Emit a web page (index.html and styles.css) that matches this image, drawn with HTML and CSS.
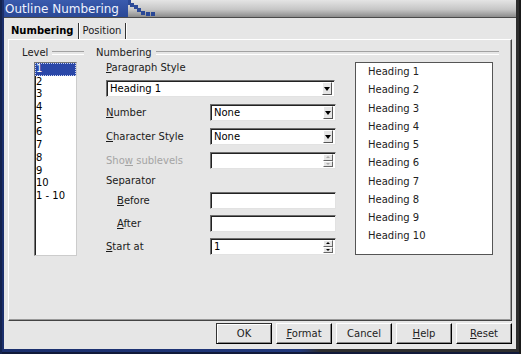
FILE: index.html
```html
<!DOCTYPE html>
<html lang="en">
<head>
  <meta charset="UTF-8">
  <meta name="viewport" content="width=device-width, initial-scale=1.0">
  <title>Outline Numbering</title>

  <link rel="stylesheet" href="styles.css">

</head>
<body>

  <div class="window">
    <!-- Title bar -->
    <div class="titlebar">
      <div class="title">Outline Numbering</div>
      <svg class="title-steps" width="30" height="17" viewBox="0 0 30 17">
        <rect x="0" y="0" width="3" height="5" fill="#2c4a98"/>
        <rect x="2" y="3" width="4" height="4" fill="#2c4a98"/>
        <rect x="6" y="5" width="4" height="4" fill="#2c4a98"/>
        <rect x="9" y="8" width="4" height="4" fill="#2c4a98"/>
        <rect x="13" y="11" width="4" height="4" fill="#2a4896"/>
        <rect x="18" y="12" width="4" height="4" fill="#2a4896"/>
        <rect x="23" y="12" width="4" height="4" fill="#2a4896"/>
      </svg>
    </div>

    <div class="dialog">
      <!-- Tabs -->
      <div class="tabs">
        <span class="tab active">Numbering</span>
        <span class="tab">Position</span>
      </div>

      <!-- Tab page -->
      <div class="panel">
        <div class="group level-group">
          <div class="group-title">Level</div>
          <ul class="level-list">
            <li class="selected">1</li>
            <li>2</li>
            <li>3</li>
            <li>4</li>
            <li>5</li>
            <li>6</li>
            <li>7</li>
            <li>8</li>
            <li>9</li>
            <li>10</li>
            <li>1 - 10</li>
          </ul>
        </div>

        <div class="group numbering-group">
          <div class="group-title">Numbering</div>
          <div class="numbering-body">
            <div class="form">
              <div class="label"><u>P</u>aragraph Style</div>
              <div class="field combo wide">
                <span class="value">Heading 1</span>
                <span class="drop"><i class="arrow"></i></span>
              </div>

              <div class="field-row row-number">
                <div class="label"><u>N</u>umber</div>
                <div class="field combo">
                  <span class="value">None</span>
                  <span class="drop"><i class="arrow"></i></span>
                </div>
              </div>

              <div class="field-row row-gap">
                <div class="label"><u>C</u>haracter Style</div>
                <div class="field combo">
                  <span class="value">None</span>
                  <span class="drop"><i class="arrow"></i></span>
                </div>
              </div>

              <div class="field-row row-gap">
                <div class="label disabled">Sho<u>w</u> sublevels</div>
                <div class="field spin disabled">
                  <span class="value"></span>
                  <span class="spin-btns">
                    <span class="spin-btn"><i class="up"></i></span>
                    <span class="spin-btn"><i class="down"></i></span>
                  </span>
                </div>
              </div>

              <div class="label separator">Separator</div>

              <div class="field-row row-before">
                <div class="label indent"><u>B</u>efore</div>
                <div class="field"></div>
              </div>

              <div class="field-row row-after">
                <div class="label indent"><u>A</u>fter</div>
                <div class="field"></div>
              </div>

              <div class="field-row row-after">
                <div class="label"><u>S</u>tart at</div>
                <div class="field spin">
                  <span class="value">1</span>
                  <span class="spin-btns">
                    <span class="spin-btn"><i class="up"></i></span>
                    <span class="spin-btn"><i class="down"></i></span>
                  </span>
                </div>
              </div>
            </div>

            <!-- Preview -->
            <ul class="preview">
              <li>Heading 1</li>
              <li>Heading 2</li>
              <li>Heading 3</li>
              <li>Heading 4</li>
              <li>Heading 5</li>
              <li>Heading 6</li>
              <li>Heading 7</li>
              <li>Heading 8</li>
              <li>Heading 9</li>
              <li>Heading 10</li>
            </ul>
          </div>
        </div>
      </div>

      <!-- Dialog buttons -->
      <div class="buttons">
        <button class="btn default">OK</button>
        <button class="btn"><u>F</u>ormat</button>
        <button class="btn">Cancel</button>
        <button class="btn"><u>H</u>elp</button>
        <button class="btn"><u>R</u>eset</button>
      </div>
    </div>
  </div>

</body>
</html>
```

FILE: styles.css
```css
/* General Reset */
* {
  margin: 0;
  padding: 0;
  box-sizing: border-box;
}

body {
  font-family: 'DejaVu Sans', sans-serif;
  font-size: 10px;
  color: #1a1a1a;
  background-color: #fff;
}

/* Window frame */
.window {
  width: 521px;
  height: 354px;
  display: flex;
  flex-direction: column;
  padding: 0 5px 5px 4px;
  background: linear-gradient(90deg, #1b2f6c 0, #21387c 300px, #2e2e2e 320px, #2e2e2e 100%);
  box-shadow: inset 2px 0 0 #14234f, inset -2px 0 0 #1a1a1a, inset 0 -2px 0 #111a3a;
}

/* Title bar */
.titlebar {
  height: 18px;
  display: flex;
  background: linear-gradient(#e4e4e4, #c6c6c6 55%, #8c8c8c);
  border-bottom: 1px solid #4a4a4a;
}

.title {
  width: 124px;
  padding: 1px 0 0 1px;
  font-size: 12px;
  line-height: 16px;
  color: #eef2ff;
  white-space: nowrap;
  background: linear-gradient(#3a5bae, #2a4896);
}

.title-steps {
  display: block;
}

/* Dialog body */
.dialog {
  flex: 1;
  display: flex;
  flex-direction: column;
  padding: 0 4px;
  background-color: #e6e6e6;
}

.tabs {
  height: 21px;
  display: flex;
  padding-top: 5px;
}

.tab {
  height: 16px;
  line-height: 16px;
  padding: 0 4px;
  border-right: 1px solid #333;
  box-shadow: 1px 0 0 #fff;
}

.tab:first-child {
  padding-left: 3px;
}

.tab.active {
  font-weight: bold;
  color: #000;
}

/* Tab page */
.panel {
  height: 282px;
  display: flex;
  gap: 12px;
  padding: 6px 12px 0 13px;
  border: 1px solid;
  border-color: #fff #444 #444 #fff;
  box-shadow: inset -1px -1px 0 #999;
}

.group-title {
  height: 13px;
  line-height: 13px;
  display: flex;
  align-items: center;
  color: #222;
}

.group-title::after {
  content: "";
  flex: 1;
  height: 2px;
  margin-left: 4px;
  border-top: 1px solid #a2a2a2;
  border-bottom: 1px solid #fff;
}

.level-group {
  width: 62px;
}

.numbering-group {
  width: 403px;
}

/* Level list */
.level-list {
  list-style: none;
  width: 43px;
  height: 194px;
  margin: 3px 0 0 12px;
  background-color: #fff;
  border: 1px solid;
  border-color: #777 #ccc #ccc #777;
  box-shadow: inset 1px 1px 0 #222;
}

.level-list li {
  height: 12.7px;
  line-height: 12.7px;
  padding-left: 1px;
  color: #000;
}

.level-list li.selected {
  color: #fff;
  background-color: #2a47a8;
  outline: 1px dotted #c9d3f2;
  outline-offset: -1px;
}

/* Numbering form */
.numbering-body {
  display: flex;
  gap: 19px;
  padding-left: 10px;
  margin-top: 3px;
}

.form {
  width: 230px;
  display: flex;
  flex-direction: column;
}

.label {
  height: 12px;
  line-height: 12px;
  white-space: nowrap;
}

.label.disabled {
  color: #a4a4a4;
}

.label.indent {
  padding-left: 11px;
}

.field-row {
  display: flex;
  align-items: center;
  height: 17px;
}

.field-row .label {
  width: 104px;
}

.row-number,
.row-gap {
  margin-top: 7px;
}

.separator {
  margin-top: 6px;
}

.row-before {
  margin-top: 5px;
}

.row-after {
  margin-top: 6px;
}

.field {
  width: 126px;
  height: 17px;
  display: flex;
  align-items: center;
  padding-left: 2px;
  background-color: #fff;
  border: 1px solid;
  border-color: #6e6e6e #e2e2e2 #e2e2e2 #6e6e6e;
  box-shadow: inset 1px 1px 0 #222;
  color: #000;
}

.field.wide {
  width: 229px;
  margin-top: 6px;
}

.value {
  flex: 1;
  padding-left: 1px;
}

.drop {
  width: 10px;
  height: 13px;
  margin-right: 2px;
  display: flex;
  flex-direction: column;
  align-items: center;
  justify-content: center;
  background-color: #e6e6e6;
  border: 1px solid;
  border-color: #fff #555 #555 #fff;
}

.arrow {
  width: 0;
  height: 0;
  border-left: 3px solid transparent;
  border-right: 3px solid transparent;
  border-top: 4px solid #000;
}

.spin-btns {
  width: 10px;
  height: 13px;
  margin-right: 2px;
  display: flex;
  flex-direction: column;
}

.spin-btn {
  flex: 1;
  display: flex;
  align-items: center;
  justify-content: center;
  background-color: #e6e6e6;
  border: 1px solid;
  border-color: #fff #666 #666 #fff;
}

.spin-btn .up,
.spin-btn .down {
  width: 0;
  height: 0;
  border-left: 2px solid transparent;
  border-right: 2px solid transparent;
}

.spin-btn .up {
  border-bottom: 2px solid #000;
}

.spin-btn .down {
  border-top: 2px solid #000;
}

.spin.disabled .up {
  border-bottom-color: #aaa;
}

.spin.disabled .down {
  border-top-color: #aaa;
}

/* Preview */
.preview {
  list-style: none;
  width: 138px;
  height: 193px;
  padding-left: 12px;
  background-color: #fff;
  border: 1px solid #555;
}

.preview li {
  height: 18.27px;
  line-height: 18.27px;
  color: #222;
}

/* Buttons */
.buttons {
  display: flex;
  justify-content: flex-end;
  gap: 4px;
  margin-top: 2px;
}

.btn {
  width: 56px;
  height: 21px;
  font-family: 'DejaVu Sans', sans-serif;
  font-size: 10px;
  color: #222;
  background-color: #e6e6e6;
  border: 1px solid;
  border-color: #fff #000 #000 #fff;
  box-shadow: inset -1px -1px 0 #888;
}

.btn.default {
  border-color: #333 #000 #000 #333;
  box-shadow: inset 1px 1px 0 #fff, inset -1px -1px 0 #888;
}
```
